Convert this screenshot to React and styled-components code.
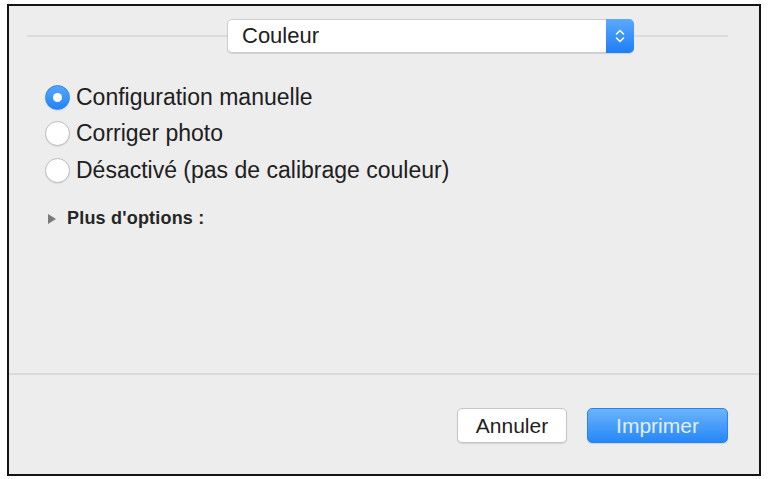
import React, { useState } from 'react';
import styled, { createGlobalStyle } from 'styled-components';

const GlobalStyle = createGlobalStyle`
  html, body {
    margin: 0;
    padding: 0;
    background: #ffffff;
  }
  body {
    font-family: "Liberation Sans", Arial, sans-serif;
    color: #222222;
  }
`;

const Page = styled.div`
  width: 768px;
  height: 479px;
  padding: 4px 0 0 7px;
  box-sizing: border-box;
`;

const Frame = styled.div`
  width: 754px;
  height: 472px;
  box-sizing: border-box;
  border: 2px solid #141414;
  background: #ededed;
  display: flex;
  flex-direction: column;
`;

const Header = styled.div`
  display: flex;
  align-items: center;
  padding: 13px 31px 0 18px;
`;

const Rule = styled.div`
  flex: ${(p) => (p.$grow ? 1 : 'none')};
  width: ${(p) => (p.$width ? `${p.$width}px` : 'auto')};
  height: 2px;
  background: #dcdcdc;
`;

const Popup = styled.div`
  width: 407px;
  height: 34px;
  box-sizing: border-box;
  display: flex;
  align-items: stretch;
  background: #ffffff;
  border: 1px solid #cdcdcd;
  border-radius: 5px;
  box-shadow: 0 1px 1px rgba(0, 0, 0, 0.12);
`;

const PopupLabel = styled.div`
  flex: 1;
  display: flex;
  align-items: center;
  padding-left: 14px;
  font-size: 22px;
  color: #202020;
`;

const Stepper = styled.div`
  width: 28px;
  margin: -1px -1px -1px 0;
  border-radius: 0 5px 5px 0;
  background: linear-gradient(#5aa9fc, #1d7ef6);
  display: flex;
  align-items: center;
  justify-content: center;
`;

const Options = styled.div`
  display: flex;
  flex-direction: column;
  padding: 26px 0 0 36px;
`;

const RadioRow = styled.label`
  display: flex;
  align-items: center;
  gap: 6px;
  height: 36.5px;
  font-size: 23px;
  color: #202020;
  cursor: default;
`;

const RadioCircle = styled.span`
  width: 25px;
  height: 25px;
  box-sizing: border-box;
  border-radius: 50%;
  display: flex;
  align-items: center;
  justify-content: center;
  background: ${(p) => (p.$on ? 'linear-gradient(#55a6fb, #2384f6)' : '#ffffff')};
  border: 1px solid ${(p) => (p.$on ? '#2a86ef' : '#bdbdbd')};
  box-shadow: 0 1px 1px rgba(0, 0, 0, 0.08);

  &::after {
    content: '';
    display: ${(p) => (p.$on ? 'block' : 'none')};
    width: 9px;
    height: 9px;
    border-radius: 50%;
    background: #ffffff;
  }
`;

const Disclosure = styled.div`
  display: flex;
  align-items: center;
  gap: 11px;
  height: 20px;
  margin-top: 20px;
  padding-left: 3px;
  font-size: 18px;
  font-weight: 700;
  letter-spacing: 0.2px;
  color: #262626;
`;

const Triangle = styled.span`
  width: 0;
  height: 0;
  border-top: 5px solid transparent;
  border-bottom: 5px solid transparent;
  border-left: 8px solid #7a7a7a;
`;

const Spacer = styled.div`
  flex: 1;
`;

const Footer = styled.div`
  height: 101px;
  box-sizing: border-box;
  border-top: 2px solid #dadada;
  display: flex;
  justify-content: flex-end;
  align-items: flex-start;
  gap: 20px;
  padding: 33px 31px 0 0;
`;

const Button = styled.button`
  height: 35px;
  width: ${(p) => p.$width}px;
  box-sizing: border-box;
  border-radius: 5px;
  font-family: "Liberation Sans", Arial, sans-serif;
  font-size: 21px;
  padding: 0;
  border: 1px solid ${(p) => (p.$primary ? '#2a83f2' : '#c6c6c6')};
  background: ${(p) => (p.$primary ? 'linear-gradient(#6cb4fc, #2587f8)' : '#ffffff')};
  color: ${(p) => (p.$primary ? '#e2efff' : '#222222')};
  box-shadow: 0 1px 1px rgba(0, 0, 0, 0.12);
`;

const choices = [
  'Configuration manuelle',
  'Corriger photo',
  'Désactivé (pas de calibrage couleur)',
];

export default function App() {
  const [selected, setSelected] = useState(0);

  return (
    <Page>
      <GlobalStyle />
      <Frame>
        <Header>
          <Rule $grow />
          <Popup>
            <PopupLabel>Couleur</PopupLabel>
            <Stepper>
              <svg width="10" height="16" viewBox="0 0 10 16" fill="none">
                <path d="M1.5 6 L5 2.5 L8.5 6" stroke="#fff" strokeWidth="1.6" strokeLinecap="round" strokeLinejoin="round" />
                <path d="M1.5 10 L5 13.5 L8.5 10" stroke="#fff" strokeWidth="1.6" strokeLinecap="round" strokeLinejoin="round" />
              </svg>
            </Stepper>
          </Popup>
          <Rule $width={94} />
        </Header>

        <Options>
          {choices.map((label, i) => (
            <RadioRow key={label} onClick={() => setSelected(i)}>
              <RadioCircle $on={selected === i} />
              {label}
            </RadioRow>
          ))}
          <Disclosure>
            <Triangle />
            Plus d'options :
          </Disclosure>
        </Options>

        <Spacer />

        <Footer>
          <Button $width={110}>Annuler</Button>
          <Button $width={141} $primary>Imprimer</Button>
        </Footer>
      </Frame>
    </Page>
  );
}
